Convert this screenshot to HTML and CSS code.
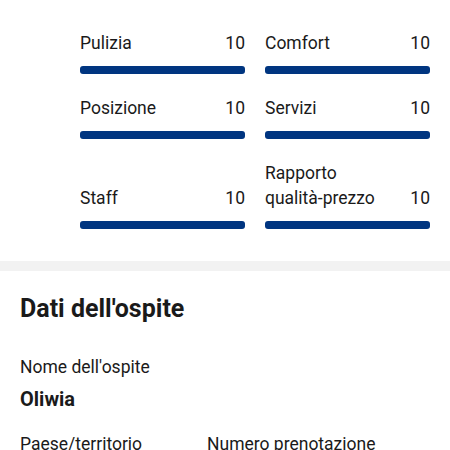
FILE: index.html
```html
<!DOCTYPE html>
<html lang="it">
<head>
    <meta charset="UTF-8">
    <meta name="viewport" content="width=device-width, initial-scale=1.0">
    <title>Dati dell'ospite</title>
    <link rel="stylesheet" href="styles.css">
</head>
<body>
    <div class="scores">
        <div class="score">
            <div class="score-head"><span>Pulizia</span><span>10</span></div>
            <div class="bar"></div>
        </div>
        <div class="score">
            <div class="score-head"><span>Comfort</span><span>10</span></div>
            <div class="bar"></div>
        </div>
        <div class="score">
            <div class="score-head"><span>Posizione</span><span>10</span></div>
            <div class="bar"></div>
        </div>
        <div class="score">
            <div class="score-head"><span>Servizi</span><span>10</span></div>
            <div class="bar"></div>
        </div>
        <div class="score">
            <div class="score-head"><span>Staff</span><span>10</span></div>
            <div class="bar"></div>
        </div>
        <div class="score">
            <div class="score-head"><span>Rapporto<br>qualità-prezzo</span><span>10</span></div>
            <div class="bar"></div>
        </div>
    </div>

    <div class="divider"></div>

    <div class="guest">
        <h2>Dati dell'ospite</h2>
        <div class="field">
            <div class="label">Nome dell'ospite</div>
            <div class="value">Oliwia</div>
        </div>
        <div class="field-row">
            <div class="label">Paese/territorio</div>
            <div class="label">Numero prenotazione</div>
        </div>
    </div>
</body>
</html>
```

FILE: styles.css
```css
body {
    margin: 0;
    font-family: Roboto, "Noto Sans", sans-serif;
    color: #1a1a1a;
    background-color: #ffffff;
}
.scores {
    display: grid;
    grid-template-columns: 1fr 1fr;
    column-gap: 20px;
    row-gap: 22px;
    padding: 31px 20px 0 80px;
    margin-bottom: 32px;
}
.score {
    display: flex;
    flex-direction: column;
    justify-content: flex-end;
}
.score-head {
    display: flex;
    justify-content: space-between;
    align-items: flex-end;
    font-size: 17.5px;
    line-height: 25px;
}
.bar {
    height: 8px;
    margin-top: 10px;
    border-radius: 3px;
    background-color: #003580;
}
.divider {
    height: 10px;
    background-color: #f2f2f2;
}
.guest {
    padding: 23px 20px 0 20px;
}
.guest h2 {
    margin: 0 0 31px 0;
    font-size: 25px;
    line-height: 30px;
    font-weight: 700;
}
.label {
    font-size: 17.5px;
    line-height: 24px;
}
.value {
    margin-top: 7px;
    font-size: 20px;
    line-height: 26px;
    font-weight: 700;
}
.field-row {
    display: grid;
    grid-template-columns: 187px 1fr;
    margin-top: 20px;
}
```
